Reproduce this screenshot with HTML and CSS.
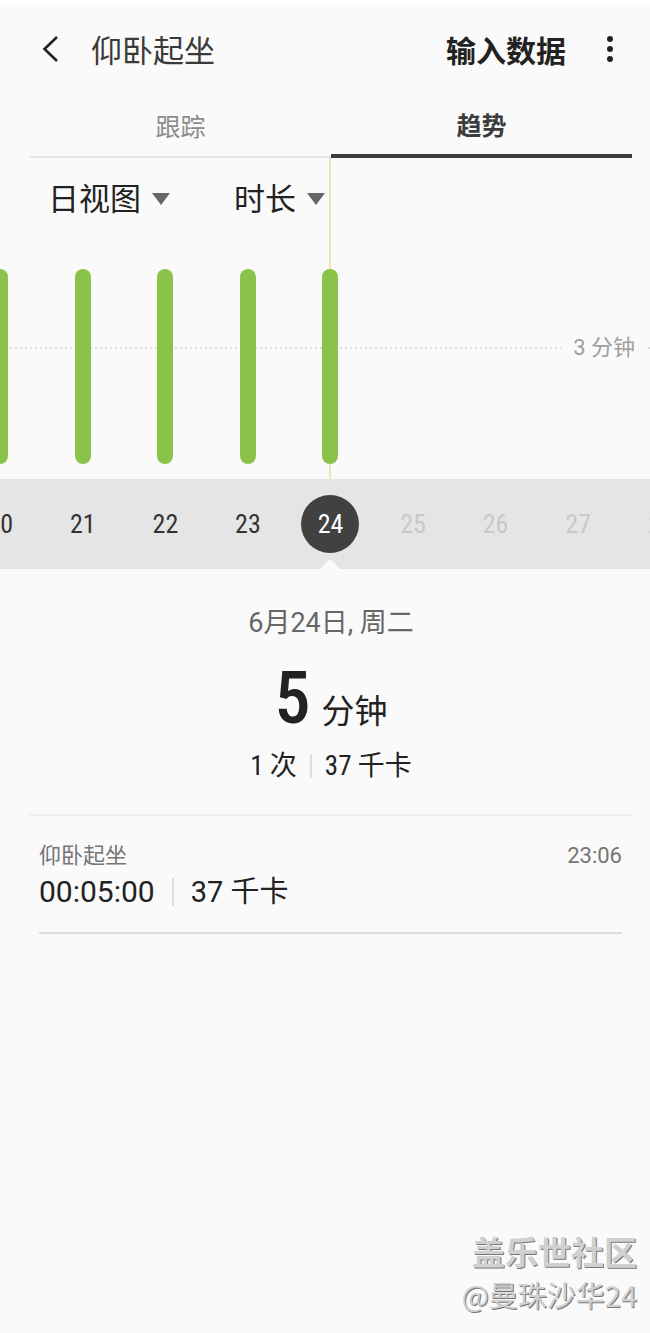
FILE: index.html
```html
<!DOCTYPE html>
<html lang="zh-CN">
<head>
<meta charset="utf-8">
<meta name="viewport" content="width=device-width, initial-scale=1">
<title>仰卧起坐</title>
<link rel="stylesheet" href="styles.css">
</head>
<body>
<div class="app">
  <header class="topbar">
    <button class="icon-button" type="button" aria-label="返回">
      <svg width="18" height="28" viewBox="0 0 18 28" fill="none" stroke="#222" stroke-width="2.6"><path d="M16 2 3.500 14 16 26"/></svg>
    </button>
    <h1 class="title">仰卧起坐</h1>
    <button class="action" type="button">输入数据</button>
    <button class="icon-button more" type="button" aria-label="更多选项">
      <svg width="8" height="28" viewBox="0 0 8 28" fill="#222"><circle cx="4" cy="4" r="3"/><circle cx="4" cy="14" r="3"/><circle cx="4" cy="24" r="3"/></svg>
    </button>
  </header>

  <nav class="tabs">
    <button class="tab" type="button">跟踪</button>
    <button class="tab tab-active" type="button" aria-current="page">趋势</button>
  </nav>

  <section class="chart">
    <div class="filters">
      <label class="filter">
        <select aria-label="视图"><option>日视图</option></select>
        <svg width="18" height="12" viewBox="0 0 18 12" fill="#666"><path d="M0 0H18L9 12Z"/></svg>
      </label>
      <label class="filter">
        <select aria-label="数据类型"><option>时长</option></select>
        <svg width="18" height="12" viewBox="0 0 18 12" fill="#666"><path d="M0 0H18L9 12Z"/></svg>
      </label>
    </div>
    <div class="plot">
      <div class="goal"><span class="goal-line"></span><span class="goal-label">3 分钟</span><span class="goal-end"></span></div>
      <div class="days bars">
        <span class="bar"></span><span class="bar"></span><span class="bar"></span><span class="bar"></span>
        <div class="selected"><span class="bar"></span></div>
      </div>
    </div>
  </section>

  <div class="dates">
    <div class="days">
      <button class="day" type="button">20</button>
      <button class="day" type="button">21</button>
      <button class="day" type="button">22</button>
      <button class="day" type="button">23</button>
      <button class="day day-current" type="button" aria-current="date"><span class="disc">24</span></button>
      <button class="day" type="button" disabled>25</button>
      <button class="day" type="button" disabled>26</button>
      <button class="day" type="button" disabled>27</button>
      <button class="day" type="button" disabled>28</button>
    </div>
  </div>

  <main class="content">
    <section class="summary">
      <p class="date">6月24日, 周二</p>
      <p class="total"><span class="amount">5</span><span class="unit">分钟</span></p>
      <p class="stats"><span>1 次</span><span class="rule"></span><span>37 千卡</span></p>
    </section>
    <article class="record">
      <div class="record-head"><span>仰卧起坐</span><time>23:06</time></div>
      <p class="record-data"><span>00:05:00</span><span class="rule rule-tall"></span><span class="energy">37 千卡</span></p>
    </article>
  </main>

  <footer class="credit">
    <span class="community">盖乐世社区</span>
    <span class="author">@曼珠沙华24</span>
  </footer>
</div>
</body>
</html>
```
FILE: styles.css
```css
* { box-sizing: border-box; }
body {
  margin: 0;
  background: #fafafa;
  color: #222;
  font-family: Roboto, "Noto Sans CJK SC", sans-serif;
}
h1, p { margin: 0; }
button, select {
  margin: 0;
  padding: 0;
  border: 0;
  background: none;
  color: inherit;
  font: inherit;
}
svg { display: block; flex: none; }

.app {
  display: flex;
  flex-direction: column;
  min-height: 100vh;
  overflow: hidden;
  border-top: 4px solid #fff;
}

.topbar {
  display: flex;
  align-items: center;
  height: 89px;
  padding: 0 36px 0 41px;
}
.title {
  margin-left: 32px;
  font-size: 31px;
  font-weight: 400;
  color: #3a3a3a;
}
.action {
  margin-left: auto;
  font-size: 30px;
  font-weight: 700;
}
.more { margin-left: 40px; }

.tabs {
  display: grid;
  grid-template-columns: 1fr 1fr;
  height: 65px;
  margin: 0 18px 0 30px;
}
.tab {
  border-bottom: 2px solid #e6e6e6;
  font-size: 25px;
  color: #8c8c8c;
}
.tab-active {
  border-bottom: 4px solid #3c3c3c;
  color: #3c3c3c;
  font-weight: 700;
}

.filters {
  display: flex;
  gap: 64px;
  height: 82px;
  padding-left: 48px;
}
.filter {
  display: flex;
  align-items: center;
  gap: 11px;
  font-size: 31px;
}
.filter select { appearance: none; }

.plot {
  display: grid;
  height: 239px;
}
.plot > * { grid-area: 1 / 1; }
.goal {
  display: flex;
  align-items: center;
  height: 30px;
  margin-top: 93px;
  font-size: 22px;
  line-height: 24px;
  color: #a0a0a0;
}
.goal-line {
  flex: 1;
  height: 2px;
  background: repeating-linear-gradient(90deg, #dcdcdc 0 2px, transparent 2px 5px);
}
.goal-label { margin: 0 13px 0 12px; }
.goal-end { width: 2px; height: 2px; background: #dcdcdc; }

.days {
  display: grid;
  grid-template-columns: repeat(9, 1fr);
  margin: 0 -52px 0 -41px;
}
.bars {
  padding: 29px 0 15px;
  justify-items: center;
}
.bar {
  position: relative;
  display: block;
  width: 16px;
  height: 195px;
  border-radius: 8px;
  background: #8bc34a;
}
.selected { position: relative; }
.selected::before {
  content: "";
  position: absolute;
  top: -111px;
  bottom: -15px;
  left: 7px;
  width: 2px;
  background: #eee4b8;
}

.dates { background: #e5e5e5; }
.day {
  height: 90px;
  font-family: "Roboto Condensed", "Liberation Sans Narrow", Roboto, sans-serif;
  font-size: 26px;
  color: #333;
}
.day:disabled { color: #c8c8c8; }
.day-current {
  position: relative;
  color: #fff;
}
.day-current::after {
  content: "";
  position: absolute;
  bottom: 0;
  left: calc(50% - 10px);
  border: 10px solid transparent;
  border-top: 0;
  border-bottom-color: #fafafa;
}
.disc {
  display: grid;
  place-items: center;
  width: 58px;
  height: 58px;
  margin: 0 auto;
  border-radius: 50%;
  background: #414141;
}

.summary {
  display: flex;
  flex-direction: column;
  align-items: center;
  height: 247px;
  margin: 0 18px 0 30px;
  padding-top: 34px;
  border-bottom: 2px solid #eee;
}
.date {
  font-size: 27px;
  line-height: 40px;
  color: #666;
}
.total {
  display: flex;
  align-items: baseline;
  gap: 11px;
  height: 103px;
  padding-top: 11px;
  line-height: 90px;
}
.amount {
  font-family: "Roboto Condensed", Roboto, sans-serif;
  font-size: 72px;
  font-weight: 500;
}
.unit { font-size: 33px; }
.stats {
  display: flex;
  align-items: center;
  gap: 13px;
  font-family: "Roboto Condensed", Roboto, "Noto Sans CJK SC", sans-serif;
  font-size: 27px;
  line-height: 40px;
}
.rule {
  width: 2px;
  height: 24px;
  background: #ddd;
}
.rule-tall { height: 28px; }

.record {
  height: 118px;
  margin: 0 28px 0 39px;
  padding-top: 24px;
  border-bottom: 2px solid #ddd;
}
.record-head {
  display: flex;
  justify-content: space-between;
  font-size: 22px;
  line-height: 32px;
  color: #757575;
}
.record-data {
  display: flex;
  align-items: center;
  gap: 17px;
  font-size: 30px;
  line-height: 40px;
}
.energy { font-size: 29px; }

.credit {
  display: flex;
  flex-direction: column;
  align-items: flex-end;
  margin-top: auto;
  padding: 0 13px 18px;
  font-family: "Noto Sans CJK SC", sans-serif;
  color: #d0d0d0;
  text-shadow: 1px 1px 0 #777;
}
.community {
  font-size: 33px;
  font-weight: 700;
  line-height: 44px;
}
.author {
  font-size: 29px;
  line-height: 42px;
}
```
